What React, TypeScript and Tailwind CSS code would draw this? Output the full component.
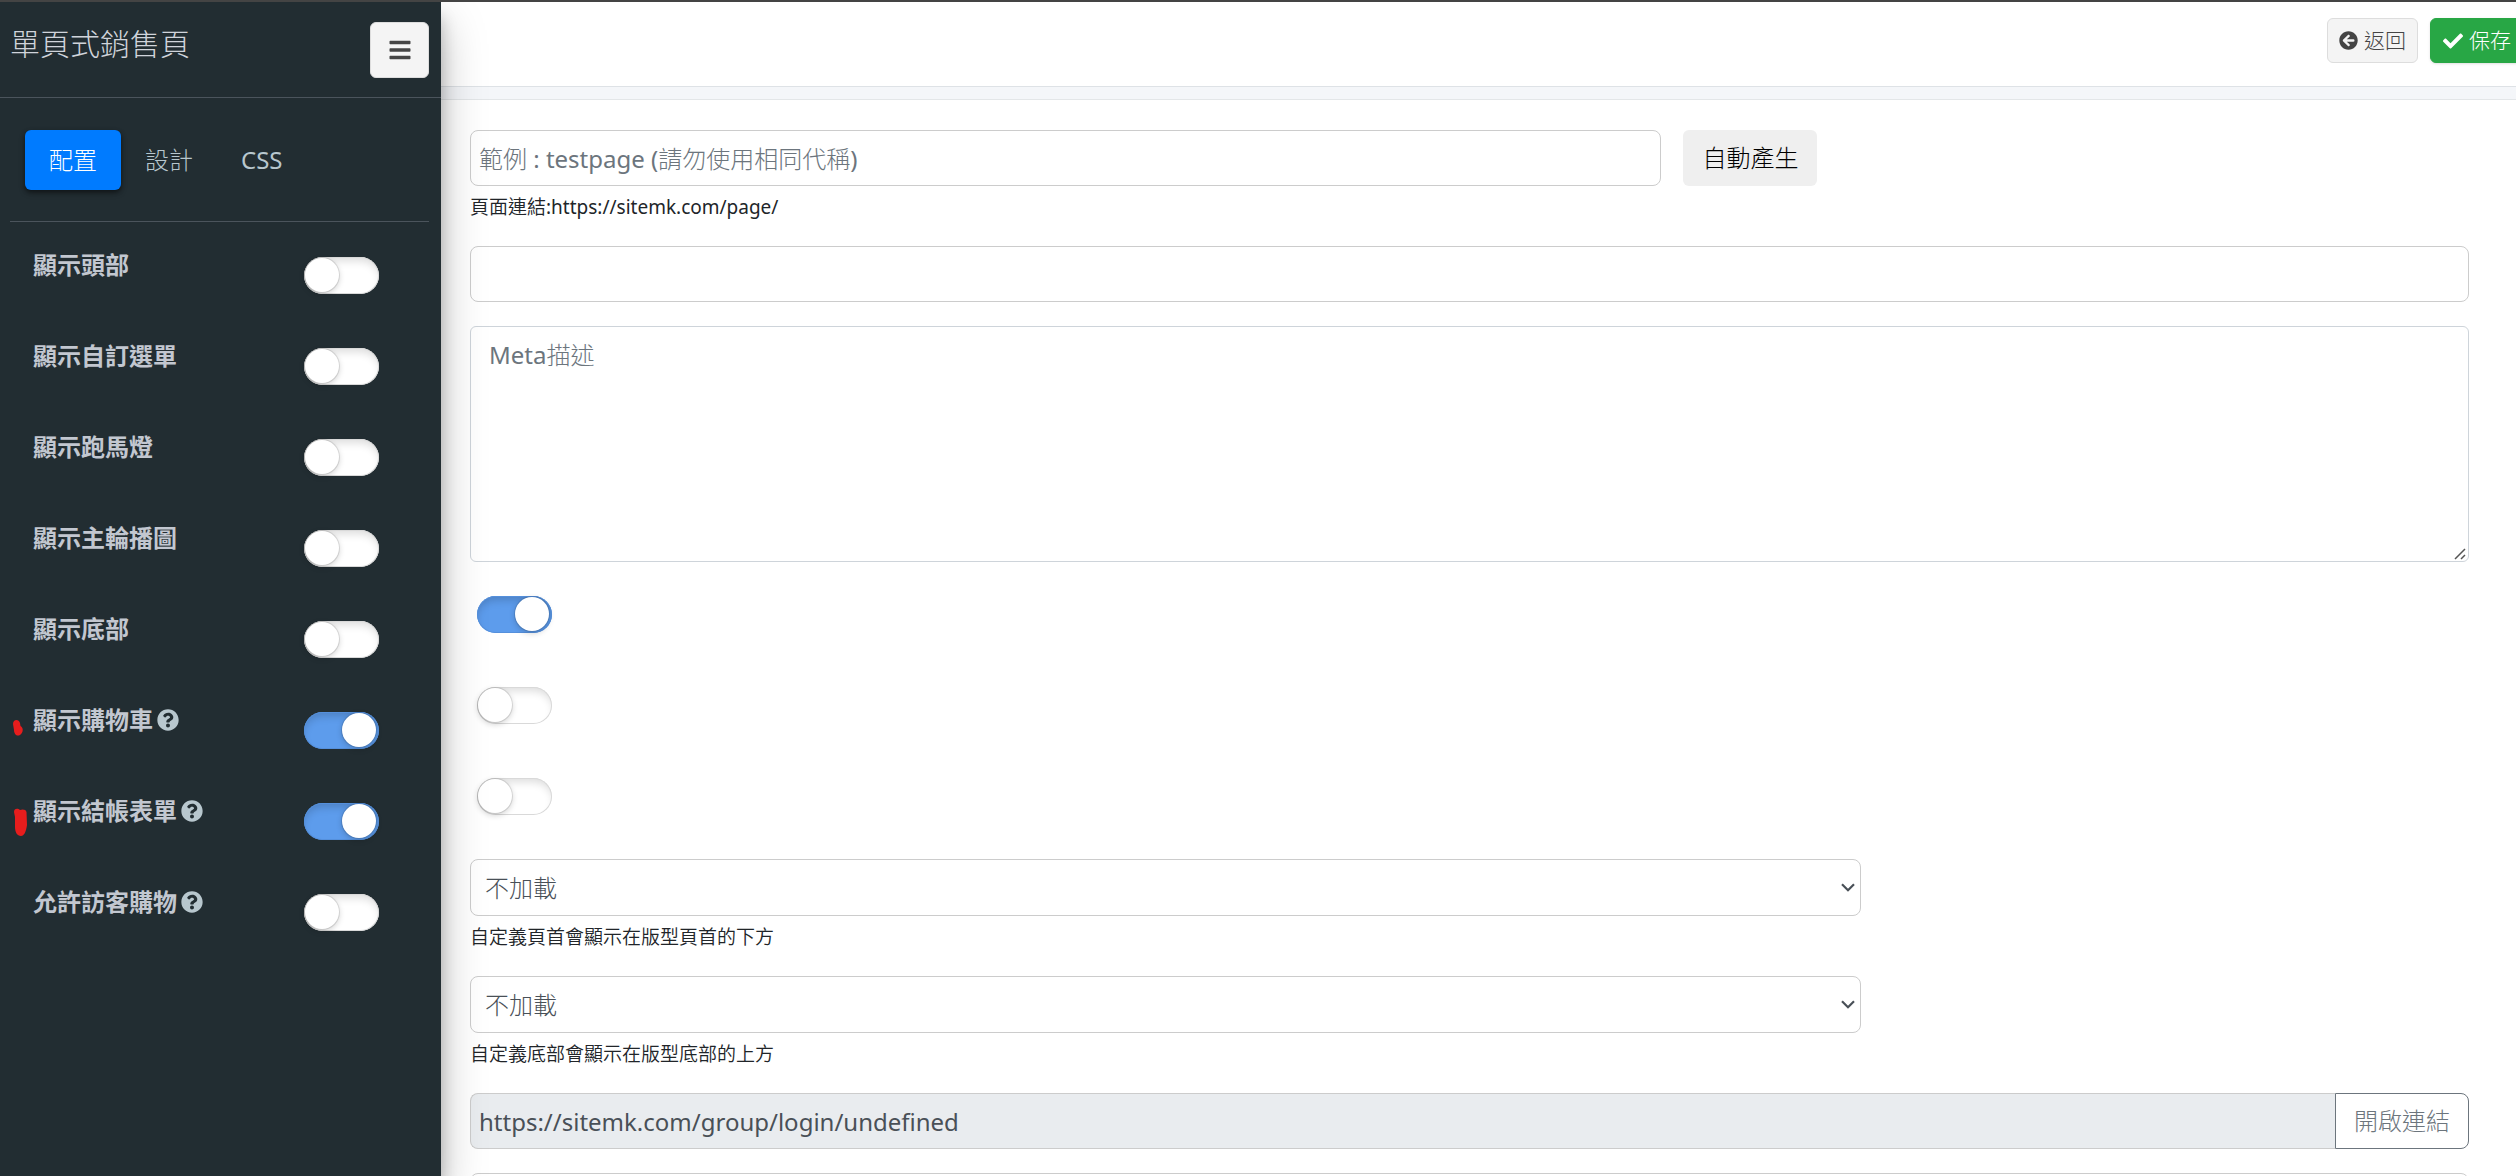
import { useState } from "react";
import {
  FaArrowCircleLeft,
  FaBars,
  FaCheck,
  FaQuestionCircle,
} from "react-icons/fa";

const tabs = ["配置", "設計", "CSS"];

const sidebarOptions = [
  { id: "header", label: "顯示頭部", on: false, help: false },
  { id: "menu", label: "顯示自訂選單", on: false, help: false },
  { id: "marquee", label: "顯示跑馬燈", on: false, help: false },
  { id: "carousel", label: "顯示主輪播圖", on: false, help: false },
  { id: "footer", label: "顯示底部", on: false, help: false },
  { id: "cart", label: "顯示購物車", on: true, help: true },
  { id: "checkout", label: "顯示結帳表單", on: true, help: true },
  { id: "guest", label: "允許訪客購物", on: false, help: true },
];

const fieldClass =
  "block h-14 w-full rounded-lg border border-[#ccc] bg-white px-2 text-2xl text-[#495057] placeholder:text-[#6c757d] placeholder:opacity-100";

const hintClass =
  "mt-1.5 font-['Noto_Sans','Noto_Sans_CJK_TC_DemiLight','Noto_Sans_CJK_TC',sans-serif] text-[19px] leading-[30px] text-[#212529]";

type SwitchProps = { id: string; label?: string; defaultOn?: boolean };

const Switch = ({ id, label, defaultOn = false }: SwitchProps) => {
  const [on, setOn] = useState(defaultOn);

  return (
    <input
      id={id}
      type="checkbox"
      role="switch"
      aria-label={label}
      checked={on}
      onChange={() => setOn(!on)}
      className="block h-[37px] w-[75px] shrink-0 cursor-pointer appearance-none rounded-full bg-white p-px shadow-[inset_0_0_0_1px_#d9d9d9,inset_0_6px_8px_-2px_rgba(0,0,0,0.14)] before:block before:h-[34px] before:w-[34px] before:rounded-full before:bg-white before:shadow-[0_0_0_1px_rgba(0,0,0,0.1),0_2px_6px_rgba(0,0,0,0.2)] checked:bg-[#5d9cec] checked:shadow-[inset_0_0_0_1px_#5590dc,inset_0_6px_8px_-2px_rgba(0,0,0,0.18)] checked:before:ml-[37px]"
    />
  );
};

type LoadSelectProps = { id: string; label: string; hint: string };

const LoadSelect = ({ id, label, hint }: LoadSelectProps) => (
  <div className="mb-6 w-[70%] pr-2">
    <div className="relative">
      <select
        id={id}
        aria-label={label}
        className="block h-[57px] w-full appearance-none rounded-lg border border-[#ccc] bg-white px-3.5 text-2xl text-[#495057]"
      >
        <option>不加載</option>
      </select>
      <svg
        viewBox="0 0 14 9"
        className="pointer-events-none absolute top-6 right-1.5 h-[9px] w-3.5"
        fill="none"
        stroke="#495057"
        strokeWidth="2.2"
      >
        <path d="M1 1.2 7 7.2 13 1.2" />
      </svg>
    </div>
    <p className={hintClass}>{hint}</p>
  </div>
);

const Sidebar = () => {
  const [activeTab, setActiveTab] = useState("配置");

  return (
    <aside className="relative z-10 w-[441px] shrink-0 bg-[#222d32] shadow-[0_21px_42px_rgba(0,0,0,0.25),0_15px_15px_rgba(0,0,0,0.22)]">
      <div className="flex h-24 items-start justify-between border-b border-[#4b545c] pt-5 pr-3 pl-2.5">
        <h1 className="text-[30px] leading-[44px] text-[#d0d4db]">
          單頁式銷售頁
        </h1>
        <button
          type="button"
          aria-label="選單"
          className="flex h-14 w-[59px] items-center justify-center rounded-md border border-[#ddd] bg-[#f4f4f4] text-2xl text-[#444]"
        >
          <FaBars />
        </button>
      </div>

      <nav className="mr-3 ml-2.5 flex border-b border-[#4b545c] px-[15px] pt-8 pb-[31px]">
        {tabs.map((tab) => (
          <button
            key={tab}
            type="button"
            onClick={() => setActiveTab(tab)}
            className={
              tab === activeTab
                ? "h-[60px] rounded-md bg-[#007bff] px-6 text-2xl text-white shadow-[0_3px_6px_rgba(0,0,0,0.3),0_2px_4px_rgba(0,0,0,0.35)]"
                : "h-[60px] rounded-md px-6 text-2xl text-[#b8c7ce]"
            }
          >
            {tab}
          </button>
        ))}
      </nav>

      <ul className="pt-[25px] pr-[62px] pl-[33px]">
        {sidebarOptions.map((option) => (
          <li
            key={option.id}
            className="relative flex h-[91px] items-start justify-between"
          >
            {option.id === "cart" && (
              <svg
                viewBox="0 0 10 16"
                className="absolute top-[18px] -left-5 h-4 w-2.5"
                fill="#e71d1d"
              >
                <path d="M0 4C0-1 6-1 7 3L7.500 6C11 8 10 13 7 15 3 17 1 13 1 10Z" />
              </svg>
            )}
            {option.id === "checkout" && (
              <svg
                viewBox="0 0 13 28"
                className="absolute top-[15px] -left-[19px] h-7 w-[13px]"
                fill="#e71d1d"
              >
                <path d="M0 4C0 0 4 0 6 2 8 1 12 1 12.500 4L13 17C12 24 10 28 7 28 3 28 1 24 1 19L1 9Z" />
              </svg>
            )}
            <label
              htmlFor={option.id}
              className="flex items-center gap-1 font-['Noto_Sans','Noto_Sans_CJK_TC',sans-serif] text-2xl leading-9 font-bold text-[#c2c7d0]"
            >
              {option.label}
              {option.help && <FaQuestionCircle className="h-[22px] w-[22px] text-[#b8c7ce]" />}
            </label>
            <div className="pt-2.5">
              <Switch id={option.id} defaultOn={option.on} />
            </div>
          </li>
        ))}
      </ul>
    </aside>
  );
};

const App = () => {
  return (
    <div className="flex h-screen flex-col overflow-hidden border-t-2 border-[#444] bg-white font-['Noto_Sans','Noto_Sans_CJK_TC_Light','Noto_Sans_CJK_TC',sans-serif]">
      <div className="flex min-h-0 grow">
        <Sidebar />

        <div className="min-w-0 grow">
          <header className="-mr-2 flex h-[85px] items-start justify-end gap-3 border-b border-[#dee2e6] pt-4">
            <button
              type="button"
              className="flex h-[45px] items-center gap-1.5 rounded-md border border-[#ddd] bg-[#f4f4f4] px-[11px] text-[21px] text-[#444]"
            >
              <FaArrowCircleLeft className="h-[19px] w-[19px]" />
              返回
            </button>
            <button
              type="button"
              className="flex h-[45px] items-center gap-1.5 rounded-md border border-[#28a745] bg-[#28a745] px-3 text-[21px] text-white shadow-sm"
            >
              <FaCheck className="h-5 w-5" />
              保存
            </button>
          </header>
          <div className="h-[13px] border-b border-[#e3e6e8] bg-[#f4f6f9]" />

          <main className="pt-[30px] pr-[47px] pl-[29px]">
            <div className="mb-6">
              <div className="flex gap-3.5">
                <div className="w-[60%] pr-2">
                  <input
                    type="text"
                    aria-label="頁面代稱"
                    placeholder="範例 : testpage (請勿使用相同代稱)"
                    className={fieldClass}
                  />
                </div>
                <button
                  type="button"
                  className="h-14 rounded-md bg-[#efefef] px-[19px] text-2xl text-black"
                >
                  自動產生
                </button>
              </div>
              <p className={hintClass}>頁面連結:https://sitemk.com/page/</p>
            </div>

            <input type="text" aria-label="標題" className={fieldClass} />

            <div className="relative my-6">
              <textarea
                aria-label="Meta描述"
                placeholder="Meta描述"
                className="block h-[236px] w-full resize-none rounded-md border border-[#ced4da] bg-white px-[18px] py-2.5 text-2xl leading-9 text-[#495057] placeholder:text-[#6c757d] placeholder:opacity-100"
              />
              <svg
                viewBox="0 0 12 12"
                className="pointer-events-none absolute right-[3px] bottom-[2px] h-3 w-3"
                stroke="#555"
                strokeWidth="1.5"
              >
                <path d="M1 11 11 1M7 11 11 7" />
              </svg>
            </div>

            <div className="flex flex-col gap-[54px] pt-2.5 pb-11 pl-[7px]">
              <Switch id="enabled" label="啟用" defaultOn />
              <Switch id="login-only" label="限會員" />
              <Switch id="hidden-page" label="隱藏" />
            </div>

            <LoadSelect
              id="custom-header"
              label="自定義頁首"
              hint="自定義頁首會顯示在版型頁首的下方"
            />
            <LoadSelect
              id="custom-footer"
              label="自定義底部"
              hint="自定義底部會顯示在版型底部的上方"
            />

            <div className="mb-6 flex">
              <input
                type="text"
                readOnly
                aria-label="登入連結"
                value="https://sitemk.com/group/login/undefined"
                className="h-14 min-w-0 grow rounded-l-lg border border-r-0 border-[#ccc] bg-[#e9ecef] px-2 text-2xl text-[#495057]"
              />
              <button
                type="button"
                className="h-14 rounded-r-lg border border-[#6c757d] bg-white px-[18px] text-2xl text-[#6c757d]"
              >
                開啟連結
              </button>
            </div>

            <input type="text" aria-label="其他" className={fieldClass} />
          </main>
        </div>
      </div>
    </div>
  );
};

export default App;
